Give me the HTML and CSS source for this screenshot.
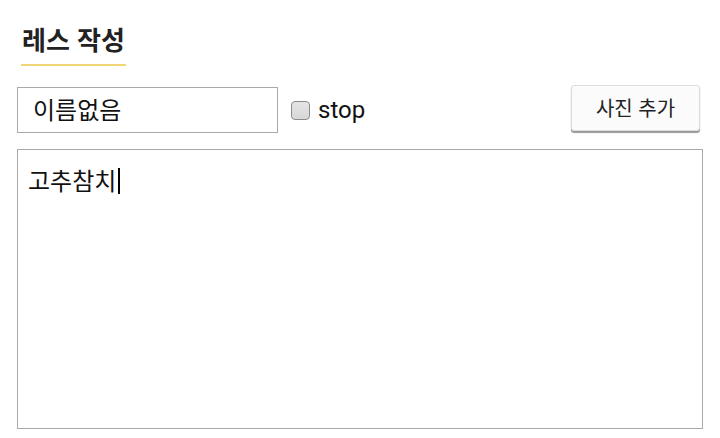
FILE: index.html
```html
<!DOCTYPE html>
<html lang="ko">
<head>
<meta charset="utf-8">
<link rel="stylesheet" href="styles.css">
</head>
<body>
<div class="page">
  <div class="header"><h1 class="title">레스 작성</h1></div>
  <div class="row">
    <div class="name-input">이름없음</div>
    <label class="stop"><span class="checkbox"></span><span class="stop-text">stop</span></label>
    <button class="photo-btn">사진 추가</button>
  </div>
  <div class="body-box"><span class="body-text">고추참치</span><span class="caret"></span></div>
</div>
</body>
</html>
```

FILE: styles.css
```css
* { box-sizing: border-box; }
html, body { margin: 0; padding: 0; background: #fff; }
body {
  font-family: Roboto, "Noto Sans CJK KR", sans-serif;
  color: #222;
}
.page {
  padding: 21px 17px 0 17px;
  width: 720px;
}
.header { padding-left: 4px; }
.title {
  display: inline-block;
  margin: 0;
  font-family: "Noto Sans CJK KR", sans-serif;
  font-size: 26px;
  font-weight: 700;
  line-height: 36px;
  padding: 0 1px 7px 1px;
  border-bottom: 2px solid #f1d477;
  color: #222;
}
.row {
  display: flex;
  align-items: center;
  margin-top: 21px;
  width: 683px;
}
.name-input {
  width: 261px;
  height: 46px;
  border: 1px solid #a9a9a9;
  font-family: "Noto Sans CJK KR", sans-serif;
  font-size: 24px;
  line-height: 42px;
  padding-left: 15px;
  color: #111;
}
.stop {
  display: flex;
  align-items: center;
  margin-left: 13px;
}
.checkbox {
  width: 19px;
  height: 19px;
  margin-top: 1px;
  border: 1px solid #8a8a8a;
  border-radius: 4px;
  background: linear-gradient(#e4e4e4, #d8d8d8);
}
.stop-text {
  margin-left: 8px;
  font-family: Roboto, sans-serif;
  font-size: 24px;
  color: #111;
}
.photo-btn {
  margin-left: auto;
  margin-top: -5px;
  width: 129px;
  height: 46px;
  background: #fbfbfb;
  border: 1px solid #dcdcdc;
  border-radius: 3px;
  box-shadow: 0 2px 1px #999;
  font-family: "Noto Sans CJK KR", sans-serif;
  font-size: 20px;
  color: #222;
  padding: 0;
}
.body-box {
  margin-top: 16px;
  width: 686px;
  height: 280px;
  border: 1px solid #a9a9a9;
  padding: 13px 10px;
  font-family: "Noto Sans CJK KR", sans-serif;
  font-size: 24px;
  line-height: 34px;
  color: #111;
  display: flex;
  align-items: flex-start;
}
.caret {
  display: inline-block;
  width: 2px;
  height: 26px;
  margin-top: 5px;
  margin-left: 2px;
  background: #000;
}
```
